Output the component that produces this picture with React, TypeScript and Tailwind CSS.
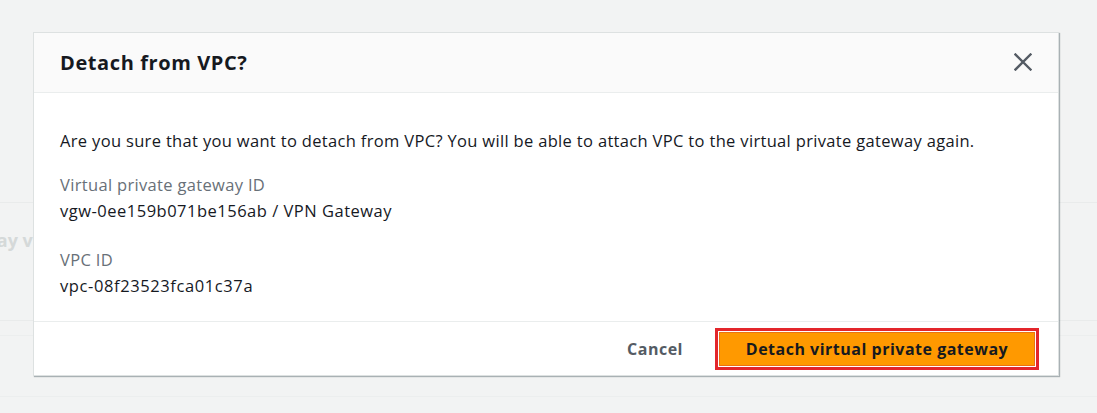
export default function App() {
    return (
        <div className="relative h-[413px] w-[1097px] overflow-hidden bg-[#f2f3f3] font-['Open_Sans',sans-serif]">
            {/* page content behind the modal */}
            <div className="flex flex-col pt-[202px]">
                <div className="h-px bg-[#e9ebeb]" />
                <div className="h-[24px]" />
                <div className="-ml-[61px] whitespace-nowrap text-[18px] leading-[26px] font-bold text-[#d5d9d9]">
                    Gateway v
                </div>
                <div className="h-[67px]" />
                <div className="h-px bg-[#e9ebeb]" />
                <div className="h-[14px]" />
                <div className="h-px bg-[#eceeee]" />
                <div className="h-[60px]" />
                <div className="h-px bg-[#eceeee]" />
            </div>

            {/* modal */}
            <div className="absolute left-[33px] top-[32px] w-[1026px] border border-[#dde1e1] bg-white shadow-[1px_1px_1px_0_rgba(0,28,36,0.3)]">
                <div className="flex h-[60px] items-center justify-between border-b border-[#eaeded] bg-[#fafafa] pl-[26px] pr-[26px]">
                    <h2 className="text-[20px] font-bold tracking-[0.6px] text-[#16191f]">Detach from VPC?</h2>
                    <svg width="18" height="18" viewBox="0 0 18 18" className="-mt-[2px]" aria-label="Close">
                        <path d="M1.5 1.5 L16.5 16.5 M16.5 1.5 L1.5 16.5" stroke="#545b64" strokeWidth="2.4" strokeLinecap="square" fill="none" />
                    </svg>
                </div>

                <div className="flex flex-col px-[26px] pt-[35px] pb-[22px] text-[16.5px] leading-[26px] tracking-[0.33px] text-[#16191f]">
                    <p>
                        Are you sure that you want to detach from VPC? You will be able to attach VPC to the virtual private gateway again.
                    </p>
                    <div className="mt-[18px] text-[#687078]">Virtual private gateway ID</div>
                    <div className="tracking-[0.5px]">vgw-0ee159b071be156ab / VPN Gateway</div>
                    <div className="mt-[23px] text-[#687078]">VPC ID</div>
                    <div className="tracking-[0.6px]">vpc-08f23523fca01c37a</div>
                </div>

                <div className="flex h-[54px] items-center justify-end gap-[32px] border-t border-[#eaeded] pr-[19px]">
                    <button className="text-[16px] font-bold tracking-[0.5px] text-[#545b64]">Cancel</button>
                    <div className="border-[3px] border-[#e3262b] p-px">
                        <button className="h-[34px] w-[316px] border border-[#ec7211] bg-[#ff9900] text-[16px] font-bold tracking-[0.5px] text-[#16191f]">
                            Detach virtual private gateway
                        </button>
                    </div>
                </div>
            </div>
        </div>
    );
}
